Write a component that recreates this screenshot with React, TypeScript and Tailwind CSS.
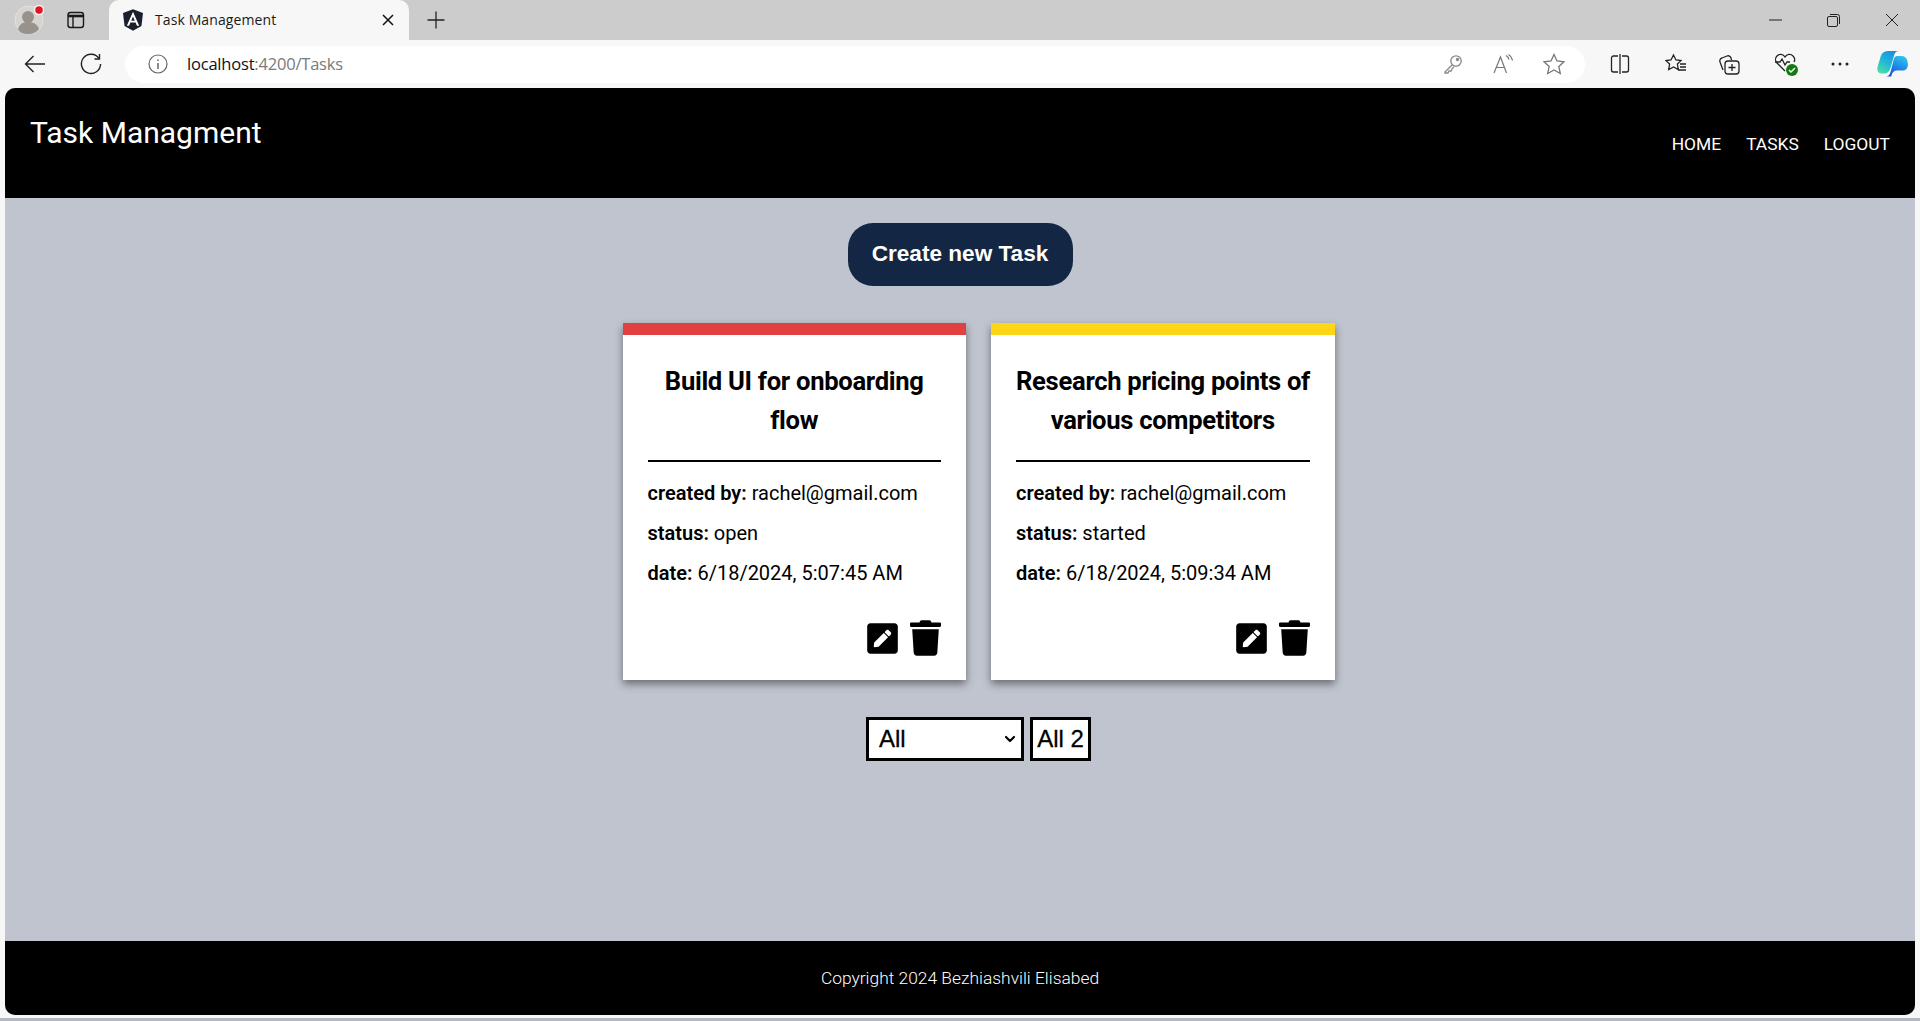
import { ChevronDown } from "lucide-react";
import { FaPenSquare, FaTrash } from "react-icons/fa";

type Task = { title: string[]; status: string; date: string; color: string };

const tasks: Task[] = [
  { title: ["Build UI for onboarding", "flow"], status: "open", date: "6/18/2024, 5:07:45 AM", color: "bg-[#e04040]" },
  { title: ["Research pricing points of", "various competitors"], status: "started", date: "6/18/2024, 5:09:34 AM", color: "bg-[#ffd616]" },
];

function TaskCard({ task }: { task: Task }) {
  return (
    <div className="relative flex h-[357px] w-[343.5px] flex-col bg-white px-[25px] pt-[12px] shadow-[0_4px_8px_rgba(0,0,0,0.45)]">
      <div className={`absolute left-0 right-0 top-0 h-[12px] ${task.color}`} />
      <h2 className="mt-[27px] whitespace-nowrap text-center text-[25.6px] font-bold leading-[39px] tracking-[-0.3px]">
        {task.title.map((line) => (
          <div key={line}>{line}</div>
        ))}
      </h2>
      <div className="mt-[20px] h-[2px] bg-black" />
      <div className="mt-[17px] flex flex-col gap-[12px] text-[20px] leading-[28px]">
        <p><b className="font-semibold">created by:</b> rachel@gmail.com</p>
        <p><b className="font-semibold">status:</b> {task.status}</p>
        <p><b className="font-semibold">date:</b> {task.date}</p>
      </div>
      <div className="mt-[33px] flex items-center justify-end gap-[12px]">
        <FaPenSquare className="h-[35px] w-[31px]" />
        <FaTrash className="h-[36px] w-[31px]" />
      </div>
    </div>
  );
}

function BrowserBar() {
  return (
    <div className="font-['Open_Sans',sans-serif]">
      {/* tab strip */}
      <div className="flex h-[40px] items-end bg-[#cccccc]">
        <div className="flex h-[40px] w-[109px] items-center pl-[14px]">
          <svg width="30" height="30" viewBox="0 0 30 30" className="relative">
            <circle cx="15" cy="15" r="14" fill="#d6d4d0" stroke="#e4e2df" />
            <circle cx="14" cy="12" r="6" fill="#97928c" />
            <path d="M4 24c2-6 6-7 10-7s9 1 11 7c-3 4-7 5-11 5s-8-1-10-5z" fill="#97928c" />
            <circle cx="25" cy="5" r="4.5" fill="#e81123" stroke="#f5f5f5" strokeWidth="1.5" />
          </svg>
          <svg width="20" height="20" viewBox="0 0 20 20" fill="none" stroke="#1a1a1a" strokeWidth="1.4" className="ml-[22px]">
            <rect x="2" y="2.5" width="15.5" height="15" rx="2.5" />
            <path d="M2 6h15.5" strokeWidth="2.6" />
            <path d="M7 6v11.5" />
          </svg>
        </div>
        <div className="flex h-[40px] w-[300px] items-center rounded-t-[10px] bg-[#f7f7f7] pb-[1px] pl-[14px]">
          <svg width="20" height="22" viewBox="15 8 220 240">
            <path d="M125 10 15 50l17 145 93 50 93-50 17-145z" fill="#1a1f2e" />
            <path d="M125 38 57 190h25l14-34h58l14 34h25zm19 97h-38l19-46z" fill="#fff" />
          </svg>
          <span className="ml-[12px] text-[14px] tracking-[0.1px] text-[#1a1a1a]">Task Management</span>
          <svg width="12" height="12" viewBox="0 0 12 12" stroke="#111" strokeWidth="1.5" className="ml-[106px]">
            <path d="M1 1l10 10M11 1 1 11" />
          </svg>
        </div>
        <div className="flex h-[40px] flex-1 items-center">
          <svg width="18" height="18" viewBox="0 0 18 18" stroke="#222" strokeWidth="1.3" className="ml-[18px]">
            <path d="M9 0.5v17M0.5 9h17" />
          </svg>
          <div className="ml-auto flex items-center">
            <svg width="14" height="14" viewBox="0 0 14 14" stroke="#222" strokeWidth="1"><path d="M0 7h13" /></svg>
            <svg width="15" height="15" viewBox="0 0 15 15" fill="none" stroke="#222" strokeWidth="1" className="ml-[43px]">
              <rect x="1.5" y="3.5" width="10" height="10" rx="1.5" />
              <path d="M4 1.5h7.5a2 2 0 0 1 2 2V11" />
            </svg>
            <svg width="14" height="14" viewBox="0 0 14 14" stroke="#222" strokeWidth="1" className="ml-[44px] mr-[21px]">
              <path d="M1 1l12 12M13 1 1 13" />
            </svg>
          </div>
        </div>
      </div>
      {/* address bar */}
      <div className="flex h-[48px] items-center bg-[#f7f7f7]">
        <svg width="22" height="20" viewBox="0 0 22 20" fill="none" stroke="#222" strokeWidth="1.4" className="ml-[24px]">
          <path d="M21 10H1.5M9.5 2 1.5 10l8 8" />
        </svg>
        <svg width="22" height="22" viewBox="0 0 22 22" fill="none" stroke="#222" strokeWidth="1.4" className="ml-[34px]">
          <path d="M19 5.5A9.6 9.6 0 1 0 20.6 11" />
          <path d="M19.5 1v5h-5" />
        </svg>
        <div className="ml-[23px] flex h-[37px] w-[1460px] items-center rounded-full bg-white pl-[23px]">
          <svg width="20" height="20" viewBox="0 0 20 20" fill="none" stroke="#666" strokeWidth="1.2">
            <circle cx="10" cy="10" r="9" />
            <path d="M10 9v6M10 5.5v1.6" strokeWidth="1.5" />
          </svg>
          <span className="ml-[19px] text-[16.5px] tracking-[-0.2px] text-[#111]">
            localhost<span className="text-[#7a7a7a]">:4200/Tasks</span>
          </span>
          <div className="ml-auto flex items-center gap-[30px] pr-[20px]">
            <svg width="20" height="20" viewBox="0 0 20 20" fill="none" stroke="#888" strokeWidth="1.3">
              <circle cx="13" cy="7" r="5.2" />
              <path d="M9 11 2 18v1h3l1-2h2l1-2 2-2.4" />
              <circle cx="14.5" cy="5.5" r="1" fill="#888" />
            </svg>
            <svg width="20" height="20" viewBox="0 0 20 20" fill="none" stroke="#777" strokeWidth="1.2">
              <path d="M1 19 7.5 3l6 16M3.5 13.5h8" />
              <path d="M13 1.5a6 6 0 0 1 3 4M15.5 0.5a8 8 0 0 1 4 6" />
            </svg>
            <svg width="22" height="22" viewBox="0 0 22 22" fill="none" stroke="#777" strokeWidth="1.3">
              <path d="M11 1.5 14 8l7 .8-5.2 4.7 1.5 7L11 17l-6.3 3.5 1.5-7L1 8.8 8 8z" />
            </svg>
          </div>
        </div>
        <div className="flex flex-1 items-center pl-[25px]">
          <svg width="20" height="20" viewBox="0 0 20 20" fill="none" stroke="#222" strokeWidth="1.3">
            <path d="M8 2H3.5A2 2 0 0 0 1.5 4v12a2 2 0 0 0 2 2H8M12 2h4.500a2 2 0 0 1 2 2v12a2 2 0 0 1-2 2H12M10 0v20" />
          </svg>
          <svg width="22" height="22" viewBox="0 0 22 22" fill="none" stroke="#222" strokeWidth="1.3" className="ml-[35px]">
            <path d="M8.500 2 11 7l5 .6-3.600 3.500.9 5.400L8.500 14l-4.800 2.500.9-5.400L1 7.600 6 7z" />
            <path d="M15 11h6M15 14h6M13 17h8" />
          </svg>
          <svg width="22" height="22" viewBox="0 0 22 22" fill="none" stroke="#222" strokeWidth="1.3" className="ml-[31px]">
            <rect x="7" y="8" width="14" height="13" rx="3" />
            <path d="M14 11v7M10.500 14.500h7" />
            <path d="M5 17 2 9a3 3 0 0 1 2-4l5-2a3 3 0 0 1 4 2l.5 2" />
          </svg>
          <div className="relative ml-[34px] h-[24px] w-[24px]">
            <svg width="22" height="22" viewBox="0 0 22 22" fill="none" stroke="#222" strokeWidth="1.3">
              <path d="M11 19 3 11a5 5 0 0 1 0-7 5 5 0 0 1 8 1 5 5 0 0 1 8-1 5 5 0 0 1 1 6" />
              <path d="M1 10h5l2-3 3 6 2-3h3" />
            </svg>
            <svg width="12" height="12" viewBox="0 0 12 12" className="absolute bottom-0 right-0">
              <circle cx="6" cy="6" r="6" fill="#107c10" />
              <path d="M3 6l2 2 4-4" fill="none" stroke="#fff" strokeWidth="1.4" />
            </svg>
          </div>
          <svg width="18" height="6" viewBox="0 0 18 6" fill="#222" className="ml-[33px]">
            <circle cx="2" cy="3" r="1.5" />
            <circle cx="9" cy="3" r="1.5" />
            <circle cx="16" cy="3" r="1.5" />
          </svg>
          <svg width="31" height="28" viewBox="0 0 31 28" className="ml-[28px]">
            <defs>
              <linearGradient id="cp1" x1="0.7" y1="0" x2="0.1" y2="1">
                <stop offset="0" stopColor="#1a8fe0" />
                <stop offset="0.5" stopColor="#22b8d8" />
                <stop offset="1" stopColor="#4fe0a0" />
              </linearGradient>
              <linearGradient id="cp2" x1="0.8" y1="0" x2="0.3" y2="1">
                <stop offset="0" stopColor="#30c8e8" />
                <stop offset="0.5" stopColor="#1f8ce8" />
                <stop offset="1" stopColor="#1a4fd0" />
              </linearGradient>
            </defs>
            <path d="M20 6h4.500c3 0 5 1.500 5.800 4.500l.5 3c.5 4-1.500 7-5.800 7H20c-3 0-5 2-5.500 5l-.3 1H8.500c3 0 4.500-2 5.200-5l3-12c.5-2 1.800-3.500 3.300-3.500z" fill="url(#cp2)" />
            <path d="M11 1h11c-2.500 0-4 1.500-4.800 4l-3.700 13c-1 3.500-3 5.500-6.500 5.500H4.500C1.500 23.500-.3 21 .4 17.500L3.500 7C4.500 3 7 1 11 1z" fill="url(#cp1)" />
          </svg>
        </div>
      </div>
    </div>
  );
}

export default function App() {
  return (
    <div className="flex h-[1021px] w-full flex-col overflow-hidden bg-[#f7f7f7] font-['Roboto',sans-serif] text-black">
      <BrowserBar />
      <div className="mx-[5px] flex h-[927px] flex-col overflow-hidden rounded-[10px] bg-[#bfc4ce]">
        <header className="flex h-[110px] items-start justify-between bg-black pl-[25px] pr-[25px] text-white">
          <h1 className="mt-[27px] text-[30px] leading-[36px]">Task Managment</h1>
          <nav className="mt-[46px] flex gap-[25px] text-[17.4px] leading-[20px]">
            <a>HOME</a>
            <a>TASKS</a>
            <a>LOGOUT</a>
          </nav>
        </header>
        <main className="flex flex-1 flex-col items-center">
          <button className="mt-[25px] h-[63px] w-[225px] rounded-[25px] bg-[#132744] pb-[2px] font-['Liberation_Sans',sans-serif] text-[22.6px] font-bold text-white">
            Create new Task
          </button>
          <div className="flex flex-col items-center pl-[37px]">
            <div className="mt-[37px] flex gap-[25px]">
              {tasks.map((t) => (
                <TaskCard key={t.date} task={t} />
              ))}
            </div>
            <div className="mt-[37px] flex gap-[6px] font-['Liberation_Sans',sans-serif] text-[24px] [-webkit-text-stroke:0.3px_black]">
              <div className="flex h-[44px] w-[158px] items-center justify-between border-[3px] border-black bg-white pl-[10px] pr-[3px]">
                <span>All</span>
                <ChevronDown className="h-[16px] w-[16px]" strokeWidth={3.2} />
              </div>
              <div className="flex h-[44px] w-[61px] items-center justify-center border-[3px] border-black bg-white">All 2</div>
            </div>
          </div>
        </main>
        <footer className="flex h-[74px] items-center justify-center bg-black pt-[1px] text-[17.4px] font-light text-white">
          Copyright 2024 Bezhiashvili Elisabed
        </footer>
      </div>
      <div className="mt-[3px] h-[3px] bg-[#b4b8c0]" />
    </div>
  );
}
